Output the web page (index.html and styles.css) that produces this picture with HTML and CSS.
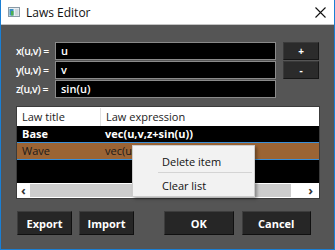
FILE: index.html
```html
<!DOCTYPE html>
<html lang="en">
<head>
    <meta charset="UTF-8">
    <title>Laws Editor</title>
    <link rel="stylesheet" href="styles.css">
</head>
<body>
    <div class="window">
        <div class="titlebar">
            <svg class="app-icon" width="12" height="10" viewBox="0 0 12 10">
                <rect x="0.5" y="0.5" width="11" height="9" fill="#e8eef2" stroke="#8a9aa6"/>
                <rect x="1.5" y="2" width="4" height="6.5" fill="#3c8fc4"/>
                <rect x="3" y="4" width="2.5" height="4.5" fill="#4caf50"/>
                <rect x="7" y="2" width="3.5" height="6.5" fill="#cfd8de"/>
            </svg>
            <span class="title">Laws Editor</span>
            <svg class="close" width="11" height="11" viewBox="0 0 11 11">
                <path d="M0.5 0.5 L10.5 10.5 M10.5 0.5 L0.5 10.5" stroke="#111" stroke-width="1.1"/>
            </svg>
        </div>

        <div class="content">
            <div class="laws-form">
                <div class="fields">
                    <div class="field">
                        <label>x(u,v) =</label>
                        <div class="input">u</div>
                    </div>
                    <div class="field">
                        <label>y(u,v) =</label>
                        <div class="input">v</div>
                    </div>
                    <div class="field">
                        <label>z(u,v) =</label>
                        <div class="input">sin(u)</div>
                    </div>
                </div>
                <div class="side-buttons">
                    <button class="small-btn">+</button>
                    <button class="small-btn">-</button>
                </div>
            </div>

            <div class="list">
                <div class="list-head">
                    <div class="col-title">Law title</div>
                    <div class="col-expr">Law expression</div>
                </div>
                <div class="list-body">
                    <div class="row">
                        <div class="col-title">Base</div>
                        <div class="col-expr">vec(u,v,z+sin(u))</div>
                    </div>
                    <div class="row selected">
                        <div class="col-title">Wave</div>
                        <div class="col-expr">vec(u,v,sin(u))</div>
                    </div>
                </div>
                <div class="scrollbar">
                    <div class="arrow">&#8249;</div>
                    <div class="track"></div>
                    <div class="arrow right">&#8250;</div>
                </div>
            </div>

            <div class="actions">
                <button class="btn">Export</button>
                <button class="btn">Import</button>
                <button class="btn wide ok">OK</button>
                <button class="btn wide">Cancel</button>
            </div>
        </div>

        <div class="context-menu">
            <div class="menu-item">Delete item</div>
            <div class="menu-sep"></div>
            <div class="menu-item">Clear list</div>
        </div>
    </div>
</body>
</html>
```

FILE: styles.css
```css
body {
    margin: 0;
    font-family: "Open Sans", "Noto Sans", sans-serif;
    font-size: 11px;
}

.window {
    position: relative;
    width: 333px;
    height: 249px;
    border: 1px solid #1a7fd4;
    border-top: none;
    background-color: #555555;
}

.titlebar {
    height: 24px;
    background-color: #ffffff;
    border-bottom: 1px solid #c4c4c4;
    display: flex;
    align-items: center;
    padding: 0 8px 0 7px;
}

.app-icon {
    margin-right: 6px;
}

.title {
    flex: 1;
    font-size: 12px;
    color: #111;
}

.content {
    padding: 17px 15px 0 15px;
}

.laws-form {
    display: flex;
}

.fields {
    width: 260px;
}

.field {
    display: flex;
    align-items: center;
    margin-bottom: 1px;
}

.field label {
    width: 35px;
    color: #fff;
    font-weight: 600;
    font-size: 10.5px;
    letter-spacing: -0.45px;
    white-space: nowrap;
}

.input {
    width: 214px;
    height: 16px;
    line-height: 16px;
    padding-left: 5px;
    margin-left: auto;
    background-color: #000;
    border: 1px solid #8a8a8a;
    color: #fff;
    font-weight: 600;
}

.side-buttons {
    margin-left: 7px;
    display: flex;
    flex-direction: column;
}

.small-btn {
    width: 36px;
    height: 18px;
    padding: 0;
    margin-bottom: 1px;
    background-color: #2b2b2b;
    border: 1px solid #3a3a3a;
    border-right-color: #161616;
    border-bottom-color: #161616;
    color: #fff;
    font-family: inherit;
    font-weight: 700;
    font-size: 10px;
    line-height: 14px;
}

.list {
    margin-top: 7px;
    width: 302px;
    border: 1px solid #3c3c3c;
    background-color: #000;
}

.list-head {
    display: flex;
    background-color: #fff;
    height: 18px;
    line-height: 18px;
    color: #222;
    border-top: 1px solid #fff;
}

.list-head .col-title {
    border-right: 1px solid #e0e0e0;
}

.col-title {
    width: 78px;
    padding-left: 5px;
}

.col-expr {
    padding-left: 5px;
}

.list-body {
    height: 57px;
}

.row {
    display: flex;
    height: 16px;
    line-height: 16px;
    color: #fff;
    font-weight: 700;
}

.row.selected {
    background-color: #9b6434;
    border-top: 1px solid #3a8fd8;
    border-bottom: 1px solid #3a8fd8;
    font-weight: 400;
    color: #1a1a1a;
}

.scrollbar {
    display: flex;
    height: 15px;
    background-color: #fff;
}

.arrow {
    width: 13px;
    line-height: 14px;
    text-align: center;
    font-size: 13px;
    font-weight: 700;
    color: #333;
}

.arrow.right {
    width: 28px;
    text-align: right;
    padding-right: 6px;
    box-sizing: border-box;
}

.track {
    flex: 1;
    background-color: #cdcdcd;
    margin: 1px 0;
}

.actions {
    display: flex;
    margin-top: 12px;
    padding-left: 1px;
}

.btn {
    width: 57px;
    height: 24px;
    margin-right: 7px;
    background-color: #262626;
    border: 1px solid #101010;
    border-top-color: #3d3d3d;
    border-left-color: #3d3d3d;
    color: #fff;
    font-family: inherit;
    font-weight: 700;
    font-size: 11px;
    padding: 0;
}

.btn.wide {
    width: 72px;
    margin-right: 8px;
}

.btn.ok {
    margin-left: 23px;
}

.context-menu {
    position: absolute;
    left: 131px;
    top: 145px;
    width: 123px;
    height: 52px;
    padding-top: 5px;
    box-sizing: border-box;
    background-color: #f2f2f2;
    border: 1px solid #cccccc;
    box-shadow: 2px 2px 3px rgba(0, 0, 0, 0.35);
    color: #111;
    font-size: 11px;
}

.menu-item {
    height: 21px;
    line-height: 21px;
    padding-left: 29px;
}

.menu-sep {
    height: 1px;
    margin: 0 2px 2px 25px;
    background-color: #d4d4d4;
}
```
